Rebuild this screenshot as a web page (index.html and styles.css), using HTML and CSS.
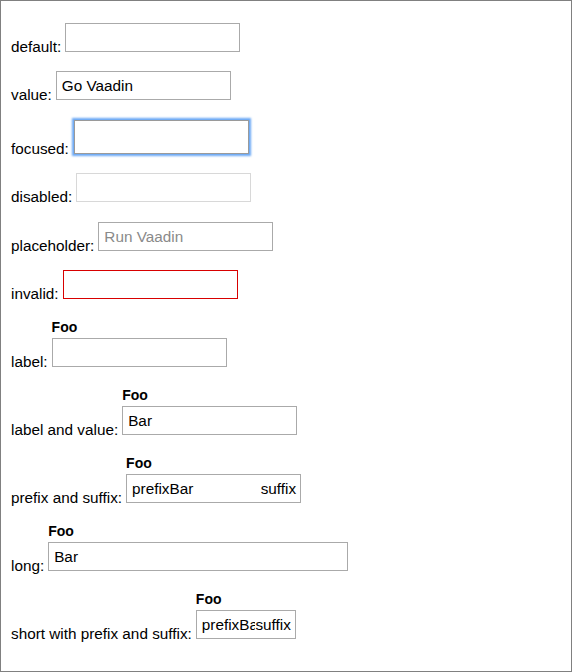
FILE: index.html
```html
<!DOCTYPE html>
<html>
<head>
<meta charset="utf-8">
<link rel="stylesheet" href="styles.css">
</head>
<body>
<div class="page">
  <div class="row"><span class="caption">default:</span><div class="field"><div class="box"><span class="input"></span></div></div></div>
  <div class="row"><span class="caption">value:</span><div class="field"><div class="box"><span class="input">Go Vaadin</span></div></div></div>
  <div class="row"><span class="caption">focused:</span><div class="field"><div class="box box-focused"><span class="input"></span></div></div></div>
  <div class="row"><span class="caption">disabled:</span><div class="field"><div class="box box-disabled"><span class="input"></span></div></div></div>
  <div class="row"><span class="caption">placeholder:</span><div class="field"><div class="box"><span class="input placeholder">Run Vaadin</span></div></div></div>
  <div class="row"><span class="caption">invalid:</span><div class="field"><div class="box box-invalid"><span class="input"></span></div></div></div>
  <div class="row"><span class="caption">label:</span><div class="field"><div class="label">Foo</div><div class="box"><span class="input"></span></div></div></div>
  <div class="row"><span class="caption">label and value:</span><div class="field"><div class="label">Foo</div><div class="box"><span class="input">Bar</span></div></div></div>
  <div class="row"><span class="caption">prefix and suffix:</span><div class="field"><div class="label">Foo</div><div class="box"><span class="prefix">prefix</span><span class="input">Bar</span><span class="suffix">suffix</span></div></div></div>
  <div class="row"><span class="caption">long:</span><div class="field"><div class="label">Foo</div><div class="box box-long"><span class="input">Bar</span></div></div></div>
  <div class="row"><span class="caption">short with prefix and suffix:</span><div class="field"><div class="label">Foo</div><div class="box box-short"><span class="prefix">prefix</span><span class="input">Bar</span><span class="suffix">suffix</span></div></div></div>
</div>
</body>
</html>
```
FILE: styles.css
```css
html, body {
  margin: 0;
  padding: 0;
  background: #ffffff;
}

.page {
  box-sizing: border-box;
  width: 572px;
  height: 672px;
  border: 1px solid #808080;
  padding: 22px 10px 0;
  display: flex;
  flex-direction: column;
  align-items: flex-start;
  gap: 19.4px;
  font-family: "Liberation Sans", Arial, sans-serif;
  font-size: 15.3px;
  color: #000;
}

.row {
  display: flex;
  align-items: flex-end;
  gap: 4px;
}

.caption {
  line-height: 15px;
  margin-bottom: -2px;
  white-space: nowrap;
}

.field {
  display: flex;
  flex-direction: column;
  align-items: flex-start;
}

.label {
  font-size: 14px;
  font-weight: bold;
  line-height: 19.6px;
  height: 19.6px;
}

.box {
  box-sizing: border-box;
  display: flex;
  align-items: center;
  width: 175px;
  height: 29px;
  border: 1px solid #aaaaaa;
  padding: 0 4px 0 5px;
  background: #fff;
  line-height: 17px;
  white-space: nowrap;
}

.box-focused {
  height: 34px;
  margin-left: 1px;
  border-color: #9a9a9a;
  box-shadow: 0 0 2px 2px #6aa8f5;
}

.box-disabled {
  border-color: #d8d8d8;
}

.box-invalid {
  border-color: #d80000;
}

.box-long {
  width: 300px;
}

.box-short {
  width: 100px;
}

.input {
  flex: 1 1 auto;
  min-width: 0;
  overflow: hidden;
}

.placeholder {
  color: #8a8a8a;
}

.prefix,
.suffix {
  flex: none;
}
```
